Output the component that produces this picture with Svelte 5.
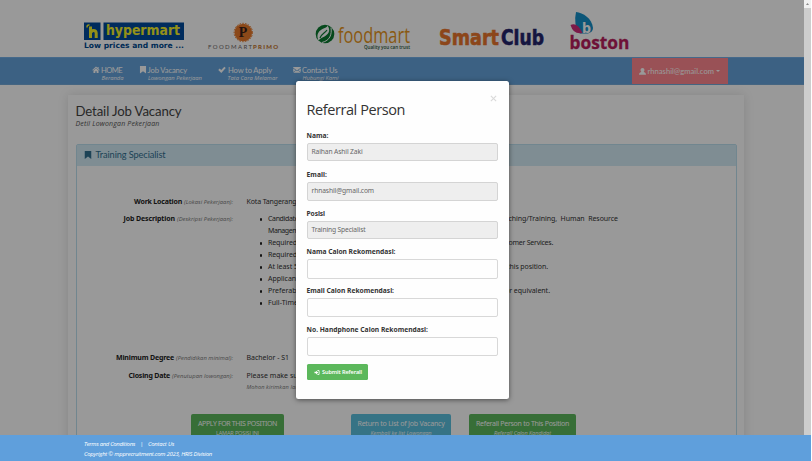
<script>
  const links = [
    { icon: 'home', label: 'HOME', sub: 'Beranda', w: 21, sw: 22, x: 92 },
    { icon: 'bookmark', label: 'Job Vacancy', sub: 'Lowongan Pekerjaan', w: 39.5, sw: 54, x: 138.5 },
    { icon: 'check', label: 'How to Apply', sub: 'Tata Cara Melamar', w: 44, sw: 50, x: 218 },
    { icon: 'mail', label: 'Contact Us', sub: 'Hubungi Kami', w: 35.5, sw: 36, x: 293 }
  ];
  const duties = [
    { left: 'Candidate must', lw: 47, right: 'Coaching/Training,  Human  Resource', rw: 122, end: 350 },
    { left: 'Management', lw: 40, cont: true },
    { left: 'Required', lw: 29, right: 'Customer Services.', rw: 58, end: 285 },
    { left: 'Required', lw: 29 },
    { left: 'At least 5', lw: 30, right: 'this position.', rw: 41, end: 280 },
    { left: 'Applicants', lw: 34 },
    { left: 'Preferably', lw: 34, right: 'or equivalent.', rw: 45, end: 282 },
    { left: 'Full-Time', lw: 30 }
  ];
  const fields = [
    { label: 'Nama:', w: 22, value: 'Raihan Ashil Zaki', vw: 51, h: 18.5, gap: 7.8 },
    { label: 'Email:', w: 20.5, value: 'rhnashil@gmail.com', vw: 62.5, h: 19, gap: 7 },
    { label: 'Posisi', w: 18.5, value: 'Training Specialist', vw: 54, h: 18.5, gap: 7 },
    { label: 'Nama Calon Rekomendasi:', w: 89, value: '', h: 19.5, gap: 6.5 },
    { label: 'Email Calon Rekomendasi:', w: 87.5, value: '', h: 19, gap: 7 },
    { label: 'No. Handphone Calon Rekomendasi:', w: 121.5, value: '', h: 19, gap: 8 }
  ];

  // Adjusts tracking so that a line of text spans the given width.
  function fit(node, width) {
    const n = node.textContent.length;
    const now = node.getBoundingClientRect().width;
    node.style.letterSpacing = (width - now) / n + 'px';
  }
</script>

{#snippet t(text, width, cls = '')}<span class="t {cls}" use:fit={width}>{text}</span>{/snippet}

{#snippet icon(name)}
  <svg class="ico" viewBox="0 0 16 16" fill="currentColor">
    {#if name === 'home'}
      <path d="M8 1 0 8.5l1.2 1.2L8 3.6l6.800 6.100L16 8.500l-2.500-2.300V2h-2.200v2zM8 4.800 2.600 9.700V15h4v-4h2.800v4h4V9.700z" />
    {:else if name === 'bookmark'}
      <path d="M1.500 0h13v16L8 11l-6.500 5z" />
    {:else if name === 'check'}
      <path d="M0 8.500 3 5.500l3.400 3.200L13 1.500l3 3L6.500 15z" />
    {:else if name === 'mail'}
      <path d="M0 2h16v1.500L8 9.500 0 3.500zM0 5.200l5 3.800-5 4zM16 5.200 11 9l5 4zM6 9.800l2 1.500 2-1.500 6 4.700H0z" />
    {:else if name === 'user'}
      <path d="M8 0c2.600 0 4.500 2 4.500 4.500S11 8 10.500 9c2.500 1 5.500 1.500 5.500 6.500H0C0 10.500 3 10 5.500 9 5 8 3.500 7 3.500 4.500S5.400 0 8 0z" />
    {:else}
      <path d="M0 5.500h5V2l7 6-7 6v-3.500H0zM9 0h3.500Q16 0 16 4v8q0 4-3.500 4H9v-2.500h3q1.500 0 1.500-2v-7q0-2-1.500-2H9z" />
    {/if}
  </svg>
{/snippet}

<div class="window">
  <div class="page">
    <header>
      <svg class="logos" viewBox="0 0 804 57" width="804" height="57">
        <rect x="84" y="22.500" width="16.500" height="17.500" fill="#004a9b" />
        <rect x="103.500" y="22.500" width="80.500" height="17.500" fill="#004a9b" />
        <g fill="none" stroke="#f5f02a" stroke-width="3">
          <path d="M90.500 26.500v11.500M91 33q0-2.500 2.500-2.500t2.700 2.500v5" />
          <path d="M87 27.500q0-3 2.500-2.500" stroke-width="1.500" />
        </g>
        <text x="106" y="35" class="verd" font-size="14.500" fill="#f5f02a" textLength="74" lengthAdjust="spacingAndGlyphs">hypermart</text>
        <text x="84" y="47.800" class="verd" font-size="7.500" fill="#004a8f" textLength="100" lengthAdjust="spacingAndGlyphs">Low prices and more ...</text>

        <circle cx="243.300" cy="32.500" r="8.800" fill="#e8792a" />
        <circle cx="243.300" cy="32.500" r="9.200" fill="none" stroke="#e8792a" stroke-width="1" stroke-dasharray="1.600 1.200" />
        <text x="238.700" y="37.200" font-family="Liberation Serif, serif" font-weight="700" font-size="14" fill="#3a1d18">P</text>
        <text x="208" y="48.500" font-family="Lato, sans-serif" font-size="6" fill="#6e6666" textLength="44">FOODMART</text>
        <text x="253" y="48.500" font-family="Lato, sans-serif" font-weight="900" font-size="6" fill="#c4762f" textLength="25">PRIMO</text>

        <ellipse cx="325" cy="34" rx="9.300" ry="9.300" fill="#0a7a30" />
        <path d="M318.500 40.500c-3-7 1-10 5-12 3-1 4-2 4-3 4 6 0 9-3 11-3 1.500-5 2.500-6 4z" fill="#fff" />
        <path d="M320 38c1-4 5-5 7-8" fill="none" stroke="#0a7a30" stroke-width="1.200" />
        <path d="M322 42.500c8-2 10-8 9-15" fill="none" stroke="#fff" stroke-width="1" />
        <text x="338" y="42.500" font-family="Open Sans, sans-serif" font-size="21.500" fill="#e7951d" textLength="72" lengthAdjust="spacingAndGlyphs">foodmart</text>
        <text x="364" y="48.800" font-family="Open Sans, sans-serif" font-weight="600" font-size="5" fill="#29583b" textLength="46" lengthAdjust="spacingAndGlyphs">Quality you can trust</text>

        <text x="439" y="45" class="verd" font-size="21" fill="#e9752c" stroke="#e9752c" stroke-width=".6" textLength="60" lengthAdjust="spacingAndGlyphs">Smart</text>
        <text x="501" y="45" class="verd" font-size="21" fill="#24246b" stroke="#24246b" stroke-width=".6" textLength="43" lengthAdjust="spacingAndGlyphs">Club</text>

        <path d="M576 12c7 1 16 6 17 16q0 4-5 5.500h-8q-7-8-4-21.500z" fill="#1590c8" />
        <path d="M570.500 25q7-3 12 8-9 2-12-8z" fill="#cf2c7a" />
        <text x="582" y="33" class="verd" font-size="14" fill="#fff" textLength="9" lengthAdjust="spacingAndGlyphs">b</text>
        <text x="569.500" y="48.800" font-family="Open Sans, sans-serif" font-weight="700" font-size="18" fill="#b81e5c" stroke="#b81e5c" stroke-width=".3" textLength="60" lengthAdjust="spacingAndGlyphs">boston</text>
      </svg>
    </header>

    <nav>
      <div class="links">
        {#each links as l, i}
          <a class="link" style="width:{(links[i + 1]?.x ?? 350) - l.x}px">
            <span class="main">{@render icon(l.icon)}{@render t(l.label, l.w)}</span>
            <span class="sub">{@render t(l.sub, l.sw)}</span>
          </a>
        {/each}
      </div>
      <div class="account">{@render icon('user')}{@render t('rhnashil@gmail.com', 66.5)}<i class="caret"></i></div>
    </nav>

    <main>
      <h1>{@render t('Detail Job Vacancy', 106)}</h1>
      <p class="tagline">{@render t('Detil Lowongan Pekerjaan', 84)}</p>
      <section class="panel">
        <div class="heading">{@render icon('bookmark')}{@render t('Training Specialist', 70)}</div>
        <dl>
          <dt>{@render t('Work Location', 48)} <em>{@render t('(Lokasi Pekerjaan):', 49)}</em></dt>
          <dd>{@render t('Kota Tangerang', 50)}</dd>
        </dl>
        <dl class="job">
          <dt>{@render t('Job Description', 51.5)} <em>{@render t('(Deskripsi Pekerjaan):', 56)}</em></dt>
          <dd>
            <ul>
              {#each duties as d}
                <li class:cont={d.cont} style="width:{d.end ?? 200}px">
                  {@render t(d.left, d.lw)}
                  {#if d.right}{@render t(d.right, d.rw)}{/if}
                </li>
              {/each}
            </ul>
          </dd>
        </dl>
        <dl class="degree">
          <dt>{@render t('Minimum Degree', 58)} <em>{@render t('(Pendidikan minimal):', 57)}</em></dt>
          <dd>{@render t('Bachelor - S1', 42.5)}</dd>
        </dl>
        <dl class="closing">
          <dt>{@render t('Closing Date', 41.5)} <em>{@render t('(Penutupan lowongan):', 61)}</em></dt>
          <dd>
            {@render t('Please make sure', 58)}
            <em class="note">{@render t('Mohon kirimkan lamaran', 66)}</em>
          </dd>
        </dl>
        <div class="actions">
          <div class="act apply">{@render t('APPLY FOR THIS POSITION', 79)}<em>{@render t('LAMAR POSISI INI', 43)}</em></div>
          <div class="act back">{@render t('Return to List of Job Vacancy', 87)}<em>{@render t('Kembali ke list Lowongan', 61)}</em></div>
          <div class="act refer">{@render t('Referall Person to This Position', 93)}<em>{@render t('Referall Calon Kandidat', 57)}</em></div>
        </div>
      </section>
    </main>
  </div>
  <div class="scrollbar"><svg viewBox="0 0 7 8" width="7" height="8"><path d="M2 5 3.500 3 5 5z" fill="#888" /></svg></div>
  <div class="backdrop"></div>

  <footer>
    <div>{@render t('Terms and Conditions', 51)}<span class="bar">|</span>{@render t('Contact Us', 26)}</div>
    <div>{@render t('Copyright © mpprecruitment.com 2023, HRIS Division', 128)}</div>
  </footer>

  <form class="modal">
    <svg class="close" viewBox="0 0 8 8" width="7" height="7"><path d="M1 1l6 6M7 1 1 7" stroke="#dadada" stroke-width="1.300" /></svg>
    <h2>{@render t('Referral Person', 98.500)}</h2>
    {#each fields as f}
      <label style="margin-bottom:{f.gap}px">
        <b>{@render t(f.label, f.w)}</b>
        <span class="input" class:filled={f.value} style="height:{f.h}px">{#if f.value}{@render t(f.value, f.vw)}{/if}</span>
      </label>
    {/each}
    <div class="submit">{@render icon('login')}{@render t('Submit Referall', 40)}</div>
  </form>
</div>

<style>
  :global(body) { margin: 0; overflow: hidden; background: #fff; }
  .window { position: relative; width: 812px; height: 461px; overflow: hidden; display: flex; font: 7px/12px "Noto Sans", sans-serif; color: #333; white-space: nowrap; }
  .window * { box-sizing: border-box; }
  .t { display: inline-block; white-space: pre; flex: none; }
  .page { width: 804px; height: 461px; overflow: hidden; background: #fff; display: flex; flex-direction: column; }
  header { height: 57px; flex: none; }
  .logos { display: block; }
  .verd { font-family: "DejaVu Sans", sans-serif; font-weight: 700; }
  .ico { width: 8px; height: 8px; flex: none; }
  nav { height: 27.500px; flex: none; background: #65a2db; border-top: 1px solid #74b0e6; border-bottom: 1px solid #74a9d8; display: flex; justify-content: space-between; padding: 0 76px 0 92px; color: #fff; }
  .links { display: flex; padding-top: 6px; }
  .link { display: flex; flex-direction: column; }
  .main { display: flex; align-items: center; gap: 1px; height: 12px; font: 7.600px/12px Lato, sans-serif; }
  .main .ico { width: 8px; height: 7.500px; }
  .sub { padding-left: 9.500px; font: italic 5.800px/7px "Open Sans", sans-serif; margin-top: -1.500px; }
  .link:nth-child(3) .main { gap: 2px; }
  .account { width: 96px; height: 26px; background: #ff888f; display: flex; align-items: center; padding-left: 7px; gap: 1.500px; font: 7.600px/12px Lato, sans-serif; }
  .account .ico { width: 7px; height: 7px; }
  .caret { border: 2px solid transparent; border-top-color: #fff; margin: 2px 0 0 0; }
  main { width: 676px; height: 380px; flex: none; margin: 10.500px 0 0 67.500px; padding: 8px 7px 0 8px; box-shadow: 0 0 10px rgba(0, 0, 0, .13); display: flex; flex-direction: column; }
  h1 { margin: 0; font: 400 13.200px/16px Lato, sans-serif; color: #444; }
  .tagline { margin: 0; font: italic 7px/9px "Open Sans", sans-serif; color: #555; }
  .panel { margin-top: 15.500px; height: 340px; flex: none; border: 1px solid #bcdfee; border-radius: 2px; display: flex; flex-direction: column; }
  .heading { height: 21px; flex: none; background: #d4ebf6; color: #31708f; font: 9.200px/12px Lato, sans-serif; display: flex; align-items: center; padding-left: 7px; gap: 4px; }
  dl { margin: 30px 0 0; display: flex; gap: 13.500px; flex: none; }
  dl.job { margin-top: 5px; height: 96px; }
  dl.degree { margin-top: 42.500px; }
  dl.closing { margin-top: 6px; }
  dt { width: 156.500px; display: flex; justify-content: flex-end; gap: 2px; font-weight: 700; color: #222; }
  dt em { font: italic 400 5.800px/12.500px "Open Sans", sans-serif; color: #777; }
  dd { margin: 0; display: flex; flex-direction: column; align-items: flex-start; }
  .note { font: italic 5.600px/11px "Open Sans", sans-serif; color: #777; }
  ul { list-style: none; margin: 0; padding: 0 0 0 13px; }
  li { display: flex; justify-content: space-between; align-items: center; height: 12px; box-sizing: content-box !important; padding-left: 8.500px; position: relative; }
  li::before { content: ''; position: absolute; left: 0; top: 5px; width: 2.500px; height: 2.500px; border-radius: 50%; background: #222; }
  li.cont::before { display: none; }
  .actions { display: flex; margin: 21px 0 0 114.500px; flex: none; }
  .act { height: 28px; border-radius: 2px; color: #fff; display: flex; flex-direction: column; align-items: center; padding-top: 3.500px; }
  .act em { font: italic 5.600px/7px "Open Sans", sans-serif; }
  .apply { width: 93px; background: #5cb85c; margin-right: 67px; }
  .apply em { font-style: normal; }
  .back { width: 100px; background: #5bc0de; margin-right: 18px; }
  .refer { width: 107px; background: #5cb85c; }
  .backdrop { position: absolute; left: 0; top: 0; width: 804px; height: 461px; background: rgba(0, 0, 0, .4); }
  .scrollbar { width: 7px; height: 461px; background: #cdcdcd; }
  .scrollbar svg { display: block; background: #f1f1f1; }
  footer { position: absolute; left: 0; bottom: 0; width: 811px; height: 26.500px; background: #5f9fdc; color: #fff; padding: 4px 0 0 84px; font: italic 5.900px/10px "Open Sans", sans-serif; }
  footer div { display: flex; }
  .bar { width: 13px; text-align: center; }
  .modal { position: absolute; left: 295.500px; top: 80.500px; width: 213px; height: 318.500px; background: #fefefe; border-radius: 2.500px; box-shadow: 0 1px 5px rgba(0, 0, 0, .5); padding: 15px 10.500px 0 11px; display: flex; flex-direction: column; font: 6.700px/12px "Noto Sans", sans-serif; }
  .close { align-self: flex-end; margin: -.5px 1px 0 0; flex: none; }
  h2 { margin: -1.500px 0 11px; font: 400 14.500px/18px "Open Sans", sans-serif; color: #333; }
  label { display: flex; flex-direction: column; flex: none; }
  label b { height: 12px; margin-bottom: 1px; color: #333; font-weight: 700; }
  .input { display: flex; align-items: center; border: 1px solid #d8d8d8; border-radius: 2px; padding-left: 4px; color: #666; }
  .filled { background: #eee; border-color: #d4d4d4; }
  .submit { width: 61px; height: 16px; flex: none; border-radius: 1.500px; background: #5cb85c; color: #fff; display: flex; align-items: center; padding-left: 7px; gap: 2.500px; font-size: 5.600px; font-weight: 600; }
  .submit .ico { width: 6px; height: 5px; }
</style>
